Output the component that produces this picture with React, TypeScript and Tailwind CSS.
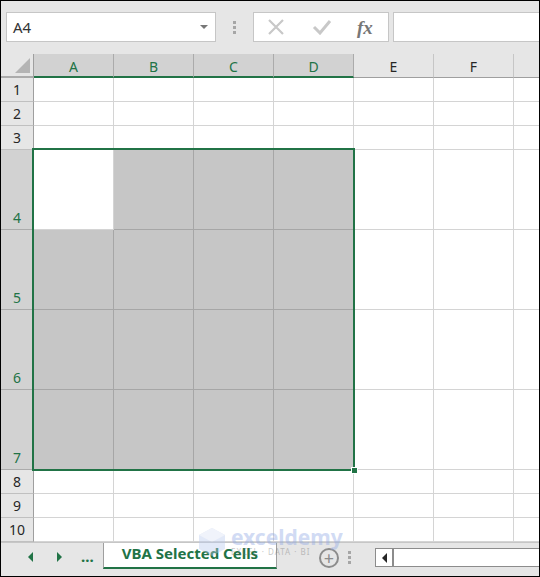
const font = "font-['Noto_Sans','Open_Sans',Arial,sans-serif]";

const columns = ["A", "B", "C", "D", "E", "F", ""];
const rows = [
  { n: 1, h: "h-6" },
  { n: 2, h: "h-6" },
  { n: 3, h: "h-6" },
  { n: 4, h: "h-20" },
  { n: 5, h: "h-20" },
  { n: 6, h: "h-20" },
  { n: 7, h: "h-20" },
  { n: 8, h: "h-6" },
  { n: 9, h: "h-6" },
  { n: 10, h: "h-6" },
];

function isSelected(row: number, col: number) {
  return row >= 4 && row <= 7 && col <= 3;
}

export default function App() {
  return (
    <div className={`${font} w-[540px] h-[577px] overflow-hidden bg-white flex flex-col border-t border-l border-r border-b border-black relative`}>
      {/* formula bar */}
      <div className="h-[53px] shrink-0 bg-[#e6e6e6] flex items-start pt-[11px] pl-[5px]">
        <div className="w-[210px] h-[30px] bg-white border border-[#c6c6c6] flex items-center justify-between pl-[6px] pr-[6px] text-[15px] text-[#333]">
          <span>A4</span>
          <span className="w-0 h-0 border-x-[4px] border-x-transparent border-t-[4px] border-t-[#777] mr-[1px]" />
        </div>
        <div className="w-[37px] h-[30px] flex flex-col items-center justify-center gap-[2px]">
          <span className="w-[3px] h-[3px] bg-[#a6a6a6]" />
          <span className="w-[3px] h-[3px] bg-[#a6a6a6]" />
          <span className="w-[3px] h-[3px] bg-[#a6a6a6]" />
        </div>
        <div className="w-[136px] h-[30px] bg-white border border-[#c6c6c6] flex items-center">
          <svg width="18" height="16" viewBox="0 0 18 16" className="ml-[13px]">
            <path d="M2 1 L16 15 M16 1 L2 15" stroke="#c8c8c8" strokeWidth="2.2" fill="none" />
          </svg>
          <svg width="20" height="16" viewBox="0 0 20 16" className="ml-[27px]">
            <path d="M2 8 L8 14 L18 2" stroke="#c8c8c8" strokeWidth="3" fill="none" />
          </svg>
          <span className="ml-[25px] font-['Liberation_Serif',serif] italic font-bold text-[19px] text-[#777] leading-none">fx</span>
        </div>
        <div className="ml-[4px] flex-1 h-[30px] bg-white border-y border-l border-[#c6c6c6]" />
      </div>

      {/* sheet */}
      <div className="relative shrink-0">
        {/* column headers */}
        <div className="flex h-[24px] bg-[#e6e6e6]">
          <div className="w-[33px] shrink-0 border-r border-[#9f9f9f] border-b-2 border-b-[#ababab] relative">
            <span className="absolute right-[3px] bottom-[3px] w-0 h-0 border-l-[15px] border-l-transparent border-b-[15px] border-b-[#b4b4b4]" />
          </div>
          {columns.map((c, i) =>
            i < 4 ? (
              <div key={i} className="w-[80px] shrink-0 bg-[#d2d2d2] border-r border-[#ababab] border-b-2 border-b-[#217346] flex items-center justify-center pt-[2px] text-[14px] text-[#217346]">
                {c}
              </div>
            ) : (
              <div key={i} className="w-[80px] shrink-0 border-r border-[#c6c6c6] border-b border-b-[#9f9f9f] flex items-center justify-center pt-[2px] text-[14px] text-[#262626]">
                {c}
              </div>
            )
          )}
        </div>

        {/* rows */}
        {rows.map((r) => {
          const active = r.n >= 4 && r.n <= 7;
          return (
            <div key={r.n} className={`flex ${r.h}`}>
              <div className={`w-[33px] shrink-0 border-r border-b flex items-end justify-center pb-[1px] text-[14px] leading-[20px] ${active ? "bg-[#d2d2d2] text-[#217346] border-r-[#217346] border-b-[#ababab]" : "bg-[#e6e6e6] text-[#262626] border-r-[#9f9f9f] border-b-[#c0c0c0]"}`}>
                {r.n}
              </div>
              {columns.map((c, i) => {
                const sel = isSelected(r.n, i);
                const blank = r.n === 4 && i === 0;
                return (
                  <div
                    key={i}
                    className={`w-[80px] shrink-0 border-r border-b ${
                      sel && !blank ? "bg-[#c6c6c6] border-[#a6a6a6]" : "bg-white border-[#d4d4d4]"
                    } ${blank ? "border-[#c6c6c6]" : ""}`}
                  />
                );
              })}
            </div>
          );
        })}

        {/* selection outline */}
        <div className="absolute left-[31px] top-[94px] w-[323px] h-[323px] border-2 border-[#217346] pointer-events-none" />
        <div className="absolute left-[350px] top-[413px] w-[5px] h-[5px] bg-[#217346] border border-white box-content pointer-events-none" />
      </div>

      {/* sheet tabs */}
      <div className="flex-1 bg-[#e6e6e6] border-t border-[#c6c6c6] flex items-start relative">
        <div className="w-[102px] h-[26px] shrink-0 flex items-center text-[#217346] pt-[2px]">
          <span className="ml-[27px] w-0 h-0 border-y-[5px] border-y-transparent border-r-[5px] border-r-[#217346]" />
          <span className="ml-[24px] w-0 h-0 border-y-[5px] border-y-transparent border-l-[5px] border-l-[#217346]" />
          <span className="ml-[19px] text-[15px] font-bold leading-none -mt-[2px]">...</span>
        </div>
        <div className="w-[174px] h-[26px] shrink-0 bg-white border-l border-r border-[#9f9f9f] border-b-2 border-b-[#217346] flex items-center justify-center pb-[3px] text-[15px] font-bold text-[#217346]">
          VBA Selected Cells
        </div>
        <div className="w-[98px] h-[26px] shrink-0 flex items-center relative pt-[4px]">
          <span className="ml-[42px] w-[20px] h-[20px] rounded-full border-2 border-[#8c8c8c] flex items-center justify-center text-[#8c8c8c] text-[18px] leading-none">+</span>
          <div className="absolute left-[71px] top-[8px] flex flex-col gap-[2px]">
            <span className="w-[3px] h-[3px] bg-[#a6a6a6]" />
            <span className="w-[3px] h-[3px] bg-[#a6a6a6]" />
            <span className="w-[3px] h-[3px] bg-[#a6a6a6]" />
          </div>
        </div>
        <div className="mt-[5px] flex-1 h-[19px] bg-white border-y border-l border-[#8c8c8c] flex">
          <div className="w-[18px] border-r-2 border-[#8c8c8c] flex items-center justify-center">
            <span className="w-0 h-0 border-y-[5px] border-y-transparent border-r-[5px] border-r-[#262626]" />
          </div>
        </div>
      </div>

      {/* watermark */}
      <div className="absolute left-[197px] top-[526px] flex items-center gap-[3px] pointer-events-none opacity-40">
        <svg width="30" height="30" viewBox="0 0 30 30">
          <path d="M14 1 L27 8 V22 L14 29 L1 22 V8 Z" fill="#b9c9ee" />
          <path d="M14 1 L27 8 L14 15 L1 8 Z" fill="#dbe3f6" />
        </svg>
        <div className="flex flex-col">
          <span className="text-[21px] font-bold text-[#8ea6e4] leading-[20px]">exceldemy</span>
          <span className="text-[8px] tracking-[1px] text-[#777] leading-[10px]">EXCEL · DATA · BI</span>
        </div>
      </div>
    </div>
  );
}
